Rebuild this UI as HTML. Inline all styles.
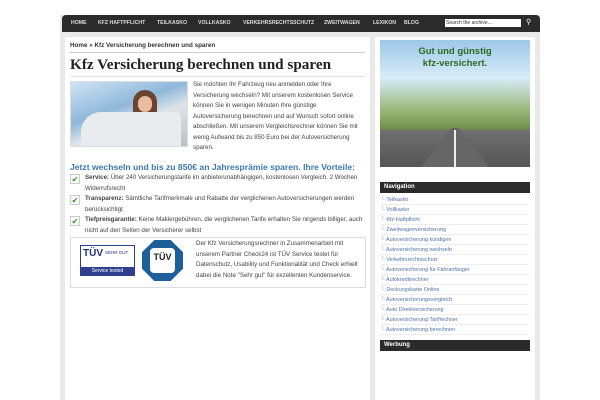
<!DOCTYPE html>
<html><head><meta charset="utf-8"><style>
*{margin:0;padding:0;box-sizing:border-box}
body{width:600px;height:400px;background:#fff;font-family:"Liberation Sans",sans-serif;position:relative;overflow:hidden}
.a{position:absolute}
#wrap{left:60px;top:15px;width:480px;height:385px;background:#e9e9e9}
#nav{left:62px;top:15px;width:478px;height:17px;background:#2b2b2b;border-radius:4px 4px 0 0;color:#ddd;font-size:5.2px;font-weight:bold}
#nav span{position:absolute;top:5px}
#main{left:65px;top:37px;width:305px;height:363px;background:#fff}
#side{left:375px;top:37px;width:160px;height:363px;background:#fff}
.p{font-size:6.2px;color:#444;line-height:10.5px;white-space:nowrap}
.nv{left:381px;width:148px;font-size:5.4px;color:#4f73a8;height:10px;border-bottom:1px solid #eee;line-height:10px}
.nv:before{content:"└ ";color:#999}
.hd{background:#2b2b2b;color:#fff;font-size:6px;font-weight:bold;left:380px;width:150px;height:11px;line-height:11px;padding-left:4px}
.ck{left:70px;width:10px;height:10px;border:1px solid #ccc;color:#2a9a1e;font-size:8px;line-height:9px;text-align:center;background:#fafafa}
</style></head><body>
<div id="wrap" class="a"></div>
<div id="nav" class="a">
<span style="left:9px">HOME</span><span style="left:36px">KFZ HAFTPFLICHT</span><span style="left:95px">TEILKASKO</span><span style="left:136px">VOLLKASKO</span><span style="left:181px">VERKEHRSRECHTSSCHUTZ</span><span style="left:262px">ZWEITWAGEN</span><span style="left:311px">LEXIKON</span><span style="left:342px">BLOG</span>
<div class="a" style="left:383px;top:4px;width:76px;height:8px;background:#fff;color:#333;font-weight:normal;font-size:5px;padding-left:1px;line-height:8px">Search the archive...</div>
<div class="a" style="left:464px;top:3px;color:#ccc;font-size:7px">⚲</div>
</div>
<div id="main" class="a"></div>
<div id="side" class="a"></div>
<div class="a" style="left:70px;top:42px;font-size:6.3px;font-weight:bold;color:#333">Home » Kfz Versicherung berechnen und sparen</div>
<div class="a" style="left:70px;top:52px;width:295px;border-top:1px solid #ccc"></div>
<div class="a" style="left:70px;top:56px;font-family:'Liberation Serif',serif;font-weight:bold;font-size:15.2px;color:#222">Kfz Versicherung berechnen und sparen</div>
<div class="a" style="left:70px;top:76px;width:295px;border-top:1px solid #e2e2e2"></div>
<div class="a" style="left:70px;top:81px;width:118px;height:66px;border:1px solid #ddd;background:linear-gradient(160deg,#cfe4f5 0%,#8fb8db 40%,#dfe4e8 60%,#b9c0c6 100%);overflow:hidden">
<div class="a" style="left:62px;top:8px;width:24px;height:30px;border-radius:12px 12px 4px 4px;background:#6a4430"></div>
<div class="a" style="left:67px;top:14px;width:14px;height:16px;border-radius:7px;background:#e9bca0"></div>
<div class="a" style="left:10px;top:30px;width:100px;height:34px;background:#e8ecef;border-radius:20px 6px 0 0"></div>
</div>
<div class="a p" style="left:193px;top:80px">Sie möchten Ihr Fahrzeug neu anmelden oder Ihre<br>Versicherung wechseln? Mit unserem kostenlosen Service<br>können Sie in wenigen Minuten Ihre günstige<br>Autoversicherung berechnen und auf Wunsch sofort online<br>abschließen. Mit unserem Vergleichsrechner können Sie mit<br>wenig Aufwand bis zu 850 Euro bei der Autoversicherung<br>sparen.</div>
<div class="a" style="left:70px;top:162px;font-size:8.6px;font-weight:bold;color:#3b78b2">Jetzt wechseln und bis zu 850€ an Jahresprämie sparen. Ihre Vorteile:</div>
<div class="a ck" style="top:174px">✔</div>
<div class="a p" style="left:85px;top:173px"><b>Service:</b> Über 240 Versicherungstarife im anbieterunabhängigen, kostenlosen Vergleich. 2 Wochen<br>Widerrufsrecht</div>
<div class="a ck" style="top:195px">✔</div>
<div class="a p" style="left:85px;top:194px"><b>Transparenz:</b> Sämtliche Tarifmerkmale und Rabatte der verglichenen Autoversicherungen werden<br>berücksichtigt</div>
<div class="a ck" style="top:216px">✔</div>
<div class="a p" style="left:85px;top:215px"><b>Tiefpreisgarantie:</b> Keine Maklergebühren, die verglichenen Tarife erhalten Sie nirgends billiger, auch<br>nicht auf den Seiten der Versicherer selbst</div>
<div class="a" style="left:70px;top:237px;width:296px;height:51px;border:1px solid #ddd"></div>
<div class="a" style="left:80px;top:245px;width:55px;height:31px;border:1px solid #2f3f90;background:#fff">
<div class="a" style="left:2px;top:2px;font-size:10px;font-weight:bold;color:#1f2f80">TÜV</div>
<div class="a" style="left:24px;top:4px;font-size:4.5px;color:#1f2f80">SEHR GUT</div>
<div class="a" style="left:0;top:21px;width:53px;height:8px;background:#2f3f90;color:#fff;font-size:5px;text-align:center;line-height:8px">Service tested</div>
</div>
<div class="a" style="left:142px;top:240px;width:41px;height:41px;background:#1d5f99;clip-path:polygon(30% 0,70% 0,100% 30%,100% 70%,70% 100%,30% 100%,0 70%,0 30%)">
<div class="a" style="left:8px;top:8px;width:25px;height:25px;background:#fff;border-radius:4px;font-size:9px;font-weight:bold;text-align:center;line-height:18px;color:#222">TÜV</div>
</div>
<div class="a p" style="left:196px;top:239px">Der Kfz Versicherungsrechner in Zusammenarbeit mit<br>unserem Partner Check24 ist TÜV Service testet für<br>Datenschutz, Usability und Funktionalität und Check erhielt<br>dabei die Note "Sehr gut" für exzellenten Kundenservice.</div>
<div class="a" style="left:380px;top:40px;width:150px;height:127px;background:linear-gradient(#9cc8ea 0%,#d8ecf8 30%,#9ab87a 55%,#6f8f4a 70%,#707070 71%,#555 100%);overflow:hidden">
<div class="a" style="left:0;top:6px;width:150px;text-align:center;font-size:9.5px;font-weight:bold;color:#2d6b1e;line-height:12px">Gut und günstig<br>kfz-versichert.</div>
<div class="a" style="left:40px;top:88px;width:70px;height:40px;background:#666;clip-path:polygon(45% 0,55% 0,100% 100%,0 100%)"></div>
<div class="a" style="left:74px;top:90px;width:2px;height:37px;background:#eee"></div>
</div>
<div class="a hd" style="top:182px">Navigation</div>
<div class="a nv" style="top:195px">Teilkasko</div>
<div class="a nv" style="top:205px">Vollkasko</div>
<div class="a nv" style="top:215px">Kfz-Haftpflicht</div>
<div class="a nv" style="top:225px">Zweitwagenversicherung</div>
<div class="a nv" style="top:235px">Autoversicherung kündigen</div>
<div class="a nv" style="top:245px">Autoversicherung wechseln</div>
<div class="a nv" style="top:255px">Verkehrsrechtsschutz</div>
<div class="a nv" style="top:265px">Autoversicherung für Fahranfänger</div>
<div class="a nv" style="top:275px">Autokreditrechner</div>
<div class="a nv" style="top:285px">Deckungskarte Online</div>
<div class="a nv" style="top:295px">Autoversicherungsvergleich</div>
<div class="a nv" style="top:305px">Auto Direktversicherung</div>
<div class="a nv" style="top:315px">Autoversicherung Tarifrechner</div>
<div class="a nv" style="top:325px">Autoversicherung berechnen</div>
<div class="a hd" style="top:340px">Werbung</div>
</body></html>
